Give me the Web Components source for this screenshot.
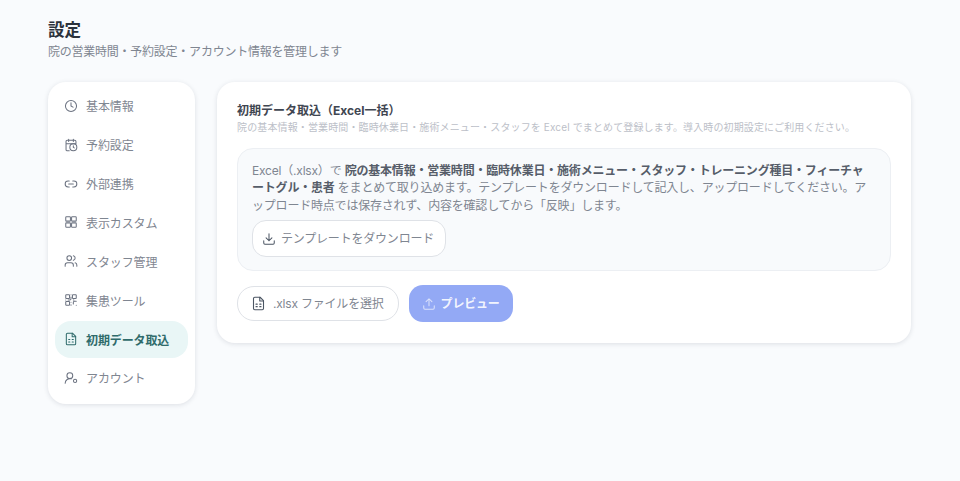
<!DOCTYPE html>
<html lang="ja">
<head>
<meta charset="utf-8">
<title>設定</title>
<style>
  html, body { margin: 0; height: 100%; }
  body {
    background: #f9fbfd;
    font-family: "Inter", "Noto Sans CJK JP", sans-serif;
    color: #374151;
    overflow: hidden;
  }
</style>
</head>
<body>
<settings-page heading="設定" sub="院の営業時間・予約設定・アカウント情報を管理します">
  <settings-nav slot="nav">
    <nav-item icon="clock">基本情報</nav-item>
    <nav-item icon="calendar">予約設定</nav-item>
    <nav-item icon="link">外部連携</nav-item>
    <nav-item icon="grid">表示カスタム</nav-item>
    <nav-item icon="users">スタッフ管理</nav-item>
    <nav-item icon="qr">集患ツール</nav-item>
    <nav-item icon="sheet" active>初期データ取込</nav-item>
    <nav-item icon="account">アカウント</nav-item>
  </settings-nav>
  <import-card heading="初期データ取込（Excel一括）" sub="院の基本情報・営業時間・臨時休業日・施術メニュー・スタッフを Excel でまとめて登録します。導入時の初期設定にご利用ください。">
    <info-panel>
      Excel（.xlsx）で <b>院の基本情報・営業時間・臨時休業日・施術メニュー・スタッフ・トレーニング種目・フィーチャートグル・患者</b> をまとめて取り込めます。テンプレートをダウンロードして記入し、アップロードしてください。アップロード時点では保存されず、内容を確認してから「反映」します。
      <app-button slot="action" icon="download">テンプレートをダウンロード</app-button>
    </info-panel>
    <app-button slot="actions" icon="sheet" size="file">.xlsx ファイルを選択</app-button>
    <app-button slot="actions" icon="upload" variant="primary">プレビュー</app-button>
  </import-card>
</settings-page>

<script>
// stroke icons, all on a 24 box
const ICONS = {
  clock: '<circle cx="12" cy="12" r="9.5"/><path d="M12 6.5V12l3.5 2"/>',
  calendar: '<path d="M8 2v4M16 2v4M3.5 10h17M20.5 9V6a2 2 0 0 0-2-2h-13a2 2 0 0 0-2 2v14a2 2 0 0 0 2 2H9"/><circle cx="16" cy="16" r="6"/><path d="M16 13.5V16l1.6 1"/>',
  link: '<path d="M9 17H7A5 5 0 0 1 7 7h2M15 7h2a5 5 0 0 1 0 10h-2M8 12h8"/>',
  grid: '<rect x="3" y="3" width="8" height="7.5" rx="1.2"/><rect x="13" y="3" width="8" height="7.5" rx="1.2"/><rect x="3" y="13.5" width="8" height="7.5" rx="1.2"/><rect x="13" y="13.5" width="8" height="7.5" rx="1.2"/>',
  users: '<path d="M16 21v-2a4 4 0 0 0-4-4H6a4 4 0 0 0-4 4v2"/><circle cx="9" cy="7" r="4"/><path d="M22 21v-2a4 4 0 0 0-3-3.9M16 3.1a4 4 0 0 1 0 7.8"/>',
  qr: '<rect x="3" y="3" width="6.5" height="6.5" rx="1"/><rect x="14.5" y="3" width="6.5" height="6.5" rx="1"/><rect x="3" y="14.5" width="6.5" height="6.5" rx="1"/><path d="M21 14h-3a2 2 0 0 0-2 2v3M21 21h.01M12 7v3a2 2 0 0 1-2 2H7M3 12h.01M12 3h.01M12 16v.01M16 12h1M12 21v-1"/>',
  sheet: '<path d="M14.5 2H6a2 2 0 0 0-2 2v16a2 2 0 0 0 2 2h12a2 2 0 0 0 2-2V7.5z"/><path d="M14 2v6h6M8 13h2M14 13h2M8 17h2M14 17h2"/>',
  account: '<path d="M2 21a8 8 0 0 1 10.5-7.5"/><circle cx="10" cy="8" r="5"/><circle cx="19" cy="17" r="2.8"/>',
  download: '<path d="M21 15v4a2 2 0 0 1-2 2H5a2 2 0 0 1-2-2v-4M7 10l5 5 5-5M12 15V3"/>',
  upload: '<path d="M21 15v4a2 2 0 0 1-2 2H5a2 2 0 0 1-2-2v-4M17 8l-5-5-5 5M12 3v12"/>'
};

const iconSvg = (name, size, width = 2) =>
  `<svg width="${size}" height="${size}" viewBox="0 0 24 24" fill="none" stroke="currentColor" stroke-width="${width}" stroke-linecap="round" stroke-linejoin="round" aria-hidden="true">${ICONS[name]}</svg>`;

class SettingsPage extends HTMLElement {
  constructor() {
    super();
    this.attachShadow({ mode: 'open' });
    this.shadowRoot.innerHTML = `
      <style>
        :host { display: block; padding: 20px 49px 0 48px; }
        h1 { margin: 0; font-size: 16.5px; line-height: 20px; font-weight: 700; color: #2b323c; }
        p { margin: 4px 0 0; font-size: 12px; line-height: 16px; color: #7f8691; letter-spacing: -0.24px; }
        .columns { display: flex; align-items: flex-start; gap: 22px; margin-top: 22px; }
        ::slotted(import-card) { flex: 1; }
      </style>
      <h1></h1>
      <p></p>
      <div class="columns">
        <slot name="nav"></slot>
        <slot></slot>
      </div>
    `;
    this.shadowRoot.querySelector('h1').textContent = this.getAttribute('heading');
    this.shadowRoot.querySelector('p').textContent = this.getAttribute('sub');
  }
}

class SettingsNav extends HTMLElement {
  constructor() {
    super();
    this.attachShadow({ mode: 'open' });
    this.shadowRoot.innerHTML = `
      <style>
        :host {
          display: flex; flex-direction: column; gap: 2px;
          flex: none; width: 133px; padding: 5.3px 7px 7.5px;
          background: #fff; border-radius: 18px;
          box-shadow: 0 1px 5px rgba(30, 41, 59, .13);
        }
      </style>
      <slot></slot>
    `;
  }
}

class NavItem extends HTMLElement {
  constructor() {
    super();
    this.attachShadow({ mode: 'open' });
    this.shadowRoot.innerHTML = `
      <style>
        :host {
          display: flex; align-items: center; gap: 8px;
          height: 36.9px; padding: 0 9px;
          border-radius: 16px;
          font-size: 12px; letter-spacing: -0.12px; color: #7f8691;
        }
        :host([active]) { background: #e9f6f6; color: #2f6b6b; font-weight: 700; }
        svg { flex: none; color: #6b7280; }
        :host([active]) svg { color: #2f6b6b; }
      </style>
      ${iconSvg(this.getAttribute('icon'), 14, 1.75)}
      <slot></slot>
    `;
  }
}

class ImportCard extends HTMLElement {
  constructor() {
    super();
    this.attachShadow({ mode: 'open' });
    this.shadowRoot.innerHTML = `
      <style>
        :host {
          display: block; padding: 21px 20px 21px;
          background: #fff; border-radius: 18px;
          box-shadow: 0 1px 5px rgba(30, 41, 59, .13);
        }
        h2 { margin: 0; font-size: 12px; line-height: 16px; font-weight: 700; color: #3f4651; }
        p { margin: 1px 0 0; font-size: 10px; line-height: 14px; letter-spacing: .13px; color: #bcc0c8; }
        .actions { display: flex; align-items: center; gap: 10px; margin-top: 14px; }
      </style>
      <h2></h2>
      <p></p>
      <slot></slot>
      <div class="actions"><slot name="actions"></slot></div>
    `;
    this.shadowRoot.querySelector('h2').textContent = this.getAttribute('heading');
    this.shadowRoot.querySelector('p').textContent = this.getAttribute('sub');
  }
}

class InfoPanel extends HTMLElement {
  constructor() {
    super();
    this.attachShadow({ mode: 'open' });
    this.shadowRoot.innerHTML = `
      <style>
        :host {
          display: block; margin-top: 14px; padding: 13px 19px 13px 14px;
          background: #f8fafc; border: 1px solid #eceff3; border-radius: 16px;
          font-size: 12px; line-height: 17.4px; letter-spacing: -0.2px; color: #7f8691;
        }
        .action { margin-top: 6px; line-height: 0; }
        ::slotted(b) { color: #565d69; }
      </style>
      <div><slot></slot></div>
      <div class="action"><slot name="action"></slot></div>
    `;
  }
}

class AppButton extends HTMLElement {
  constructor() {
    super();
    this.attachShadow({ mode: 'open' });
    const icon = this.getAttribute('icon');
    const size = this.getAttribute('size') === 'file' ? 15 : 14;
    this.shadowRoot.innerHTML = `
      <style>
        :host {
          display: inline-flex; align-items: center; gap: 5px;
          height: 37px; padding: 0 11px 0 9px; box-sizing: border-box;
          background: #fff; border: 1px solid #dfe2e7; border-radius: 14px;
          font-size: 12px; line-height: 16px; letter-spacing: -0.2px; color: #7f8691; white-space: nowrap;
        }
        :host([size="file"]) { height: 35px; padding: 0 14px 0 13px; gap: 7px; border-radius: 17px; }
        :host([variant="primary"]) {
          height: 37px; padding: 0 13px; border: 0; border-radius: 14px;
          background: #93a9f5; color: rgba(255, 255, 255, .9); font-weight: 700;
        }
        svg { flex: none; }
        :host(:not([variant="primary"])) svg { color: #4b5563; }
        :host([variant="primary"]) svg { opacity: .75; }
      </style>
      ${iconSvg(icon, size, 1.75)}
      <slot></slot>
    `;
  }
}

customElements.define('settings-page', SettingsPage);
customElements.define('settings-nav', SettingsNav);
customElements.define('nav-item', NavItem);
customElements.define('import-card', ImportCard);
customElements.define('info-panel', InfoPanel);
customElements.define('app-button', AppButton);
</script>
</body>
</html>
